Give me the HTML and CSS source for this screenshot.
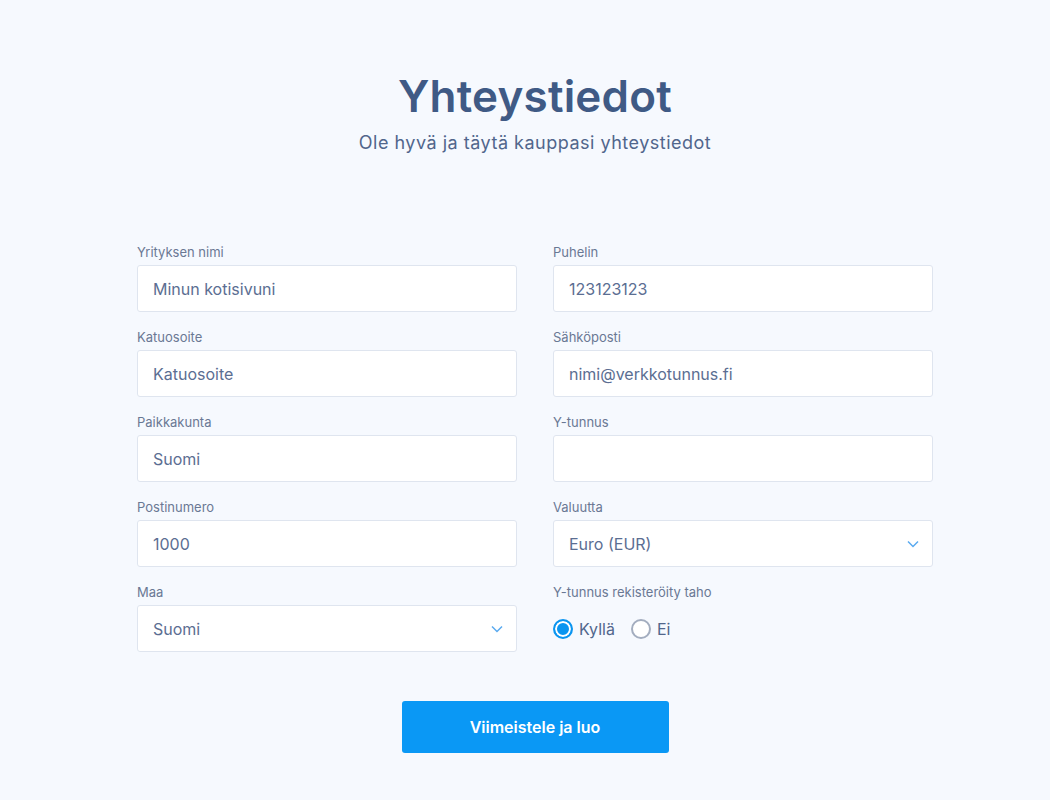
FILE: index.html
```html
<!DOCTYPE html>
<html lang="fi">
<head>
    <meta charset="UTF-8">
    <meta name="viewport" content="width=device-width, initial-scale=1.0">
    <title>Yhteystiedot</title>
    <link rel="stylesheet" href="styles.css">
</head>
<body>
    <div class="page">
        <div class="header">
            <h1>Yhteystiedot</h1>
            <p>Ole hyvä ja täytä kauppasi yhteystiedot</p>
        </div>

        <form class="contact-form">
            <div class="form-grid">
                <div class="field">
                    <label>Yrityksen nimi</label>
                    <input type="text" value="Minun kotisivuni">
                </div>
                <div class="field">
                    <label>Puhelin</label>
                    <input type="text" value="123123123">
                </div>
                <div class="field">
                    <label>Katuosoite</label>
                    <input type="text" value="Katuosoite">
                </div>
                <div class="field">
                    <label>Sähköposti</label>
                    <input type="text" value="nimi@verkkotunnus.fi">
                </div>
                <div class="field">
                    <label>Paikkakunta</label>
                    <input type="text" value="Suomi">
                </div>
                <div class="field">
                    <label>Y-tunnus</label>
                    <input type="text" value="">
                </div>
                <div class="field">
                    <label>Postinumero</label>
                    <input type="text" value="1000">
                </div>
                <div class="field">
                    <label>Valuutta</label>
                    <div class="select">
                        <span>Euro (EUR)</span>
                        <svg width="12" height="8" viewBox="0 0 12 8"><path d="M1 1.5l5 5 5-5" fill="none" stroke="#5aaaf0" stroke-width="1.5"/></svg>
                    </div>
                </div>
                <div class="field">
                    <label>Maa</label>
                    <div class="select">
                        <span>Suomi</span>
                        <svg width="12" height="8" viewBox="0 0 12 8"><path d="M1 1.5l5 5 5-5" fill="none" stroke="#5aaaf0" stroke-width="1.5"/></svg>
                    </div>
                </div>
                <div class="field">
                    <label>Y-tunnus rekisteröity taho</label>
                    <div class="radios">
                        <span class="radio checked"></span>
                        <span class="radio-label">Kyllä</span>
                        <span class="radio"></span>
                        <span class="radio-label">Ei</span>
                    </div>
                </div>
            </div>

            <div class="actions">
                <button type="button">Viimeistele ja luo</button>
            </div>
        </form>
    </div>
</body>
</html>
```

FILE: styles.css
```css
/* CSS */
body {
    font-family: Inter, "Noto Sans", sans-serif;
    background-color: #f6f9fe;
    margin: 0;
    padding: 0 0 0 20px;
    color: #3f5a85;
}

.page {
    width: 796px;
    margin: 0 auto;
    padding-top: 65px;
}

.header {
    text-align: center;
}

.header h1 {
    font-size: 44px;
    font-weight: 600;
    margin: 0;
    line-height: 62px;
    color: #3f5a85;
    letter-spacing: 0.2px;
}

.header p {
    font-size: 18px;
    margin: 1px 0 0;
    line-height: 30px;
    color: #51668c;
    letter-spacing: 0.5px;
}

.contact-form {
    margin-top: 86px;
}

.form-grid {
    display: grid;
    grid-template-columns: 380px 380px;
    column-gap: 36px;
    row-gap: 17px;
}

.field label {
    display: block;
    font-size: 13px;
    line-height: 16px;
    color: #6a7894;
    margin-bottom: 5px;
}

.field input,
.select {
    width: 100%;
    height: 47px;
    box-sizing: border-box;
    border: 1px solid #dfe5ef;
    border-radius: 3px;
    background-color: #fff;
    padding: 0 15px;
    font-family: inherit;
    font-size: 16px;
    color: #5b6e92;
}

.select {
    display: flex;
    align-items: center;
    justify-content: space-between;
    padding-right: 13px;
}

.radios {
    display: flex;
    align-items: center;
    height: 36px;
    margin-top: 11px;
}

.radio {
    width: 20px;
    height: 20px;
    box-sizing: border-box;
    border: 2px solid #a3adbf;
    border-radius: 50%;
    background-color: #fff;
}

.radio.checked {
    border-color: #0a95f0;
    background-color: #0a95f0;
    box-shadow: inset 0 0 0 2px #fff;
}

.radio-label {
    font-size: 16px;
    color: #51668c;
    margin: 0 16px 0 6px;
}

.actions {
    text-align: center;
    margin-top: 49px;
}

.actions button {
    width: 267px;
    height: 52px;
    border: none;
    border-radius: 3px;
    background-color: #0a98f5;
    color: #fff;
    font-family: inherit;
    font-size: 16px;
    font-weight: 600;
}
```
